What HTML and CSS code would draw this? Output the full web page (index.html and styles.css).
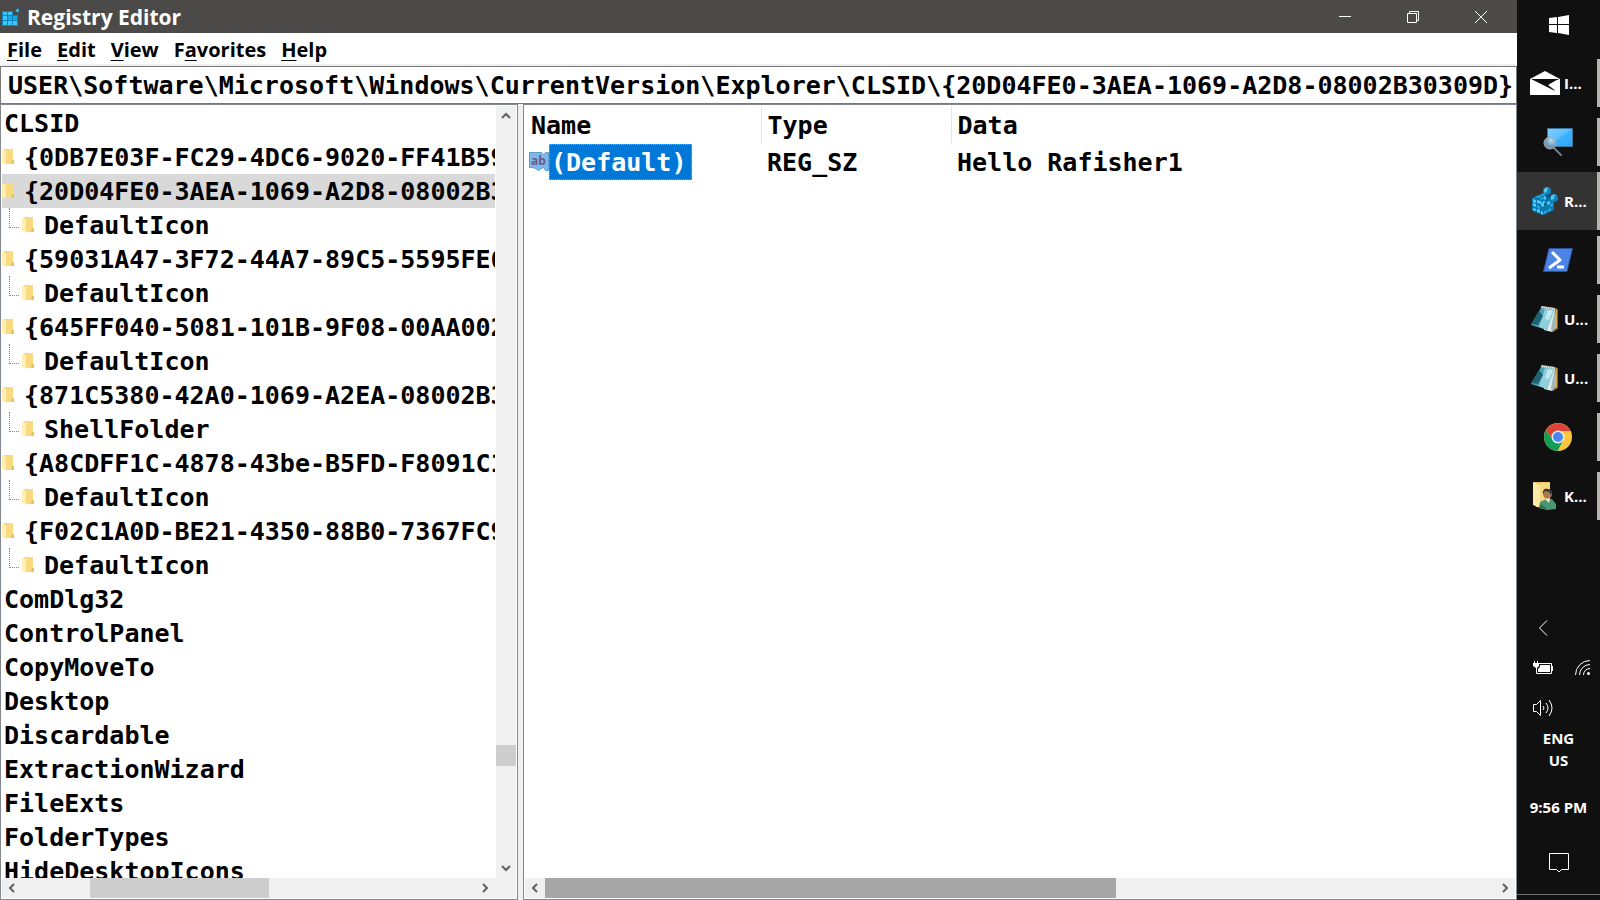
FILE: index.html
```html
<!DOCTYPE html>
<html lang="en">
<head>
    <meta charset="UTF-8">
    <meta name="viewport" content="width=device-width, initial-scale=1.0">
    <title>Registry Editor</title>
    <link rel="stylesheet" href="styles.css">
</head>
<body>
    <!-- shared icons -->
    <svg class="sprites" aria-hidden="true">
        <symbol id="folder" viewBox="0 0 12 16">
            <path fill="#f3d06c" d="M2 0h9v11h1v4H3z"/>
            <path fill="#f9da80" d="M4 0h7v11h1v4H4z"/>
            <path fill="#eec25a" d="M10 11h2v4h-3z"/>
            <path fill="#ffefb5" d="M0 0l4 2v14l-4-2z"/>
        </symbol>
        <symbol id="left" viewBox="0 0 10 10">
            <path fill="none" stroke="#606060" stroke-width="2" d="M7 1L3 5l4 4"/>
        </symbol>
        <symbol id="right" viewBox="0 0 10 10">
            <path fill="none" stroke="#606060" stroke-width="2" d="M3 1l4 4-4 4"/>
        </symbol>
        <symbol id="up" viewBox="0 0 10 10">
            <path fill="none" stroke="#606060" stroke-width="2" d="M1 7l4-4 4 4"/>
        </symbol>
        <symbol id="down" viewBox="0 0 10 10">
            <path fill="none" stroke="#606060" stroke-width="2" d="M1 3l4 4 4-4"/>
        </symbol>
        <symbol id="notepad" viewBox="0 0 28 28">
            <path fill="#8a6420" d="M23 3l4 1v20l-5 3z"/>
            <path fill="#d9a648" d="M25 4l1 1v18l-2 1z"/>
            <path fill="#dfe9ea" d="M10 1l14 2 1 19-4 5-8-2z"/>
            <path fill="#9fb7bb" d="M24 3l1 19-4 5-1-3z"/>
            <path fill="#4fa3b5" d="M10 3l13 2-7 20L0 20z"/>
            <path fill="#8fd0dc" d="M14 4l9 1-7 20-8-3z"/>
            <path fill="#1f6274" d="M8 6l4 5-5 9-7-1z"/>
            <path fill="#c5e9ee" d="M17 5l5 1-4 9-4-1z"/>
            <path fill="none" stroke="#a9a9a0" stroke-width="2" stroke-dasharray="1 1" d="M10 2l14 2"/>
        </symbol>
    </svg>

    <div class="desktop">
        <main class="window">
            <header class="titlebar">
                <svg class="app-icon" viewBox="0 0 18 18">
                    <path fill="#0a86c4" d="M0 3h11v4h5v11H0z"/>
                    <path fill="#3fc6f5" d="M1 4h4v3H1zM6 4h4v3H6zM1 8h4v4H1zM1 13h4v4H1zM6 13h4v4H6zM11 13h4v4h-4z"/>
                    <path fill="#19a5e3" d="M6 8h4v4H6zM11 8h4v4h-4z"/>
                    <path fill="#0a86c4" d="M13 2l3-2 2 2-2 3z"/>
                    <path fill="#3fc6f5" d="M15 1h1v1h1v1h-1v1h-1V3h-1V2h1z"/>
                </svg>
                <h1>Registry Editor</h1>
                <div class="caption-buttons">
                    <button aria-label="Minimize"><svg viewBox="0 0 12 12"><path d="M0 5.500h12"/></svg></button>
                    <button aria-label="Restore"><svg viewBox="0 0 12 12"><path d="M.5 2.500h9v9h-9zM2.500 2.500v-2h9v9h-2"/></svg></button>
                    <button aria-label="Close"><svg viewBox="0 0 12 12"><path d="M0 0l12 12M12 0L0 12"/></svg></button>
                </div>
            </header>

            <nav class="menubar">
                <button><span><u>F</u>ile</span></button>
                <button><span><u>E</u>dit</span></button>
                <button><span><u>V</u>iew</span></button>
                <button><span>F<u>a</u>vorites</span></button>
                <button><span><u>H</u>elp</span></button>
            </nav>

            <input class="address" type="text" aria-label="Key path" spellcheck="false" value="USER\Software\Microsoft\Windows\CurrentVersion\Explorer\CLSID\{20D04FE0-3AEA-1069-A2D8-08002B30309D}">

            <div class="panes">
                <section class="pane tree-pane">
                    <ul class="tree">
                        <li>CLSID</li>
                        <li class="key"><svg><use href="#folder"/></svg>{0DB7E03F-FC29-4DC6-9020-FF41B59E513A}</li>
                        <li class="key selected"><svg><use href="#folder"/></svg>{20D04FE0-3AEA-1069-A2D8-08002B30309D}</li>
                        <li class="key child"><svg><use href="#folder"/></svg>DefaultIcon</li>
                        <li class="key"><svg><use href="#folder"/></svg>{59031A47-3F72-44A7-89C5-5595FE6B30EE}</li>
                        <li class="key child"><svg><use href="#folder"/></svg>DefaultIcon</li>
                        <li class="key"><svg><use href="#folder"/></svg>{645FF040-5081-101B-9F08-00AA002F954E}</li>
                        <li class="key child"><svg><use href="#folder"/></svg>DefaultIcon</li>
                        <li class="key"><svg><use href="#folder"/></svg>{871C5380-42A0-1069-A2EA-08002B30309D}</li>
                        <li class="key child"><svg><use href="#folder"/></svg>ShellFolder</li>
                        <li class="key"><svg><use href="#folder"/></svg>{A8CDFF1C-4878-43be-B5FD-F8091C1C60D0}</li>
                        <li class="key child"><svg><use href="#folder"/></svg>DefaultIcon</li>
                        <li class="key"><svg><use href="#folder"/></svg>{F02C1A0D-BE21-4350-88B0-7367FC96EF3C}</li>
                        <li class="key child"><svg><use href="#folder"/></svg>DefaultIcon</li>
                        <li>ComDlg32</li>
                        <li>ControlPanel</li>
                        <li>CopyMoveTo</li>
                        <li>Desktop</li>
                        <li>Discardable</li>
                        <li>ExtractionWizard</li>
                        <li>FileExts</li>
                        <li>FolderTypes</li>
                        <li>HideDesktopIcons</li>
                    </ul>
                    <div class="scrollbar vertical">
                        <button aria-label="Scroll up"><svg><use href="#up"/></svg></button>
                        <div class="track"><div class="before"></div><div class="thumb"></div><div class="after"></div></div>
                        <button aria-label="Scroll down"><svg><use href="#down"/></svg></button>
                    </div>
                    <div class="scrollbar horizontal">
                        <button aria-label="Scroll left"><svg><use href="#left"/></svg></button>
                        <div class="track"><div class="before"></div><div class="thumb"></div><div class="after"></div></div>
                        <button aria-label="Scroll right"><svg><use href="#right"/></svg></button>
                    </div>
                </section>

                <section class="pane list-pane">
                    <div class="list">
                        <table>
                            <thead>
                                <tr><th class="col-name">Name</th><th class="col-type">Type</th><th>Data</th></tr>
                            </thead>
                            <tbody>
                                <tr>
                                    <td class="value-name">
                                        <div>
                                            <svg viewBox="0 0 20 20">
                                                <path fill="#7ab9ea" stroke="#5a9fd0" d="M.5.5h12l2 2 2-2h3v18h-3l-2-3-2 1-3 2-3-2-3-1H.5z"/>
                                                <text x="2" y="13">ab</text>
                                            </svg>
                                            <span>(Default)</span>
                                        </div>
                                    </td>
                                    <td>REG_SZ</td>
                                    <td>Hello Rafisher1</td>
                                </tr>
                            </tbody>
                        </table>
                    </div>
                    <div class="scrollbar horizontal">
                        <button aria-label="Scroll left"><svg><use href="#left"/></svg></button>
                        <div class="track"><div class="thumb"></div><div class="after"></div></div>
                        <button aria-label="Scroll right"><svg><use href="#right"/></svg></button>
                    </div>
                </section>
            </div>
        </main>

        <aside class="taskbar">
            <button class="start" aria-label="Start">
                <svg width="20" height="20" viewBox="0 0 20 20"><path fill="#fff" d="M0 3l8-1v7H0zM9 2l11-2v9H9zM0 10h8v8l-8-1zM9 10h11v10L9 18z"/></svg>
            </button>
            <div class="tasks">
                <button class="task">
                    <svg height="24" viewBox="0 0 30 24">
                        <path fill="#fff" d="M0 8l15-8 15 8v16H0z"/>
                        <path fill="#101010" d="M1 8h28l-9 5 5 7-10-5z"/>
                        <path fill="#fff" d="M27 9l-9 5 8 6z"/>
                    </svg>
                    <span>I...</span>
                </button>
                <button class="task" aria-label="Screen search">
                    <svg height="28" viewBox="0 0 30 28">
                        <defs>
                            <linearGradient id="screen" x2="1" y2="1"><stop stop-color="#7fcfff"/><stop offset=".5" stop-color="#5cbdff"/><stop offset=".5" stop-color="#3fb2ff"/><stop offset="1" stop-color="#2aa5fa"/></linearGradient>
                            <radialGradient id="lens" cx=".6" cy=".3"><stop stop-color="#b9def2"/><stop offset="1" stop-color="#7096b0"/></radialGradient>
                        </defs>
                        <path fill="url(#screen)" stroke="#3f7697" d="M4.500.5h25v18h-25z"/>
                        <path stroke="#6f7f8b" stroke-width="2" stroke-linecap="round" d="M11 20l7 7"/>
                        <circle cx="7" cy="15" r="6" fill="url(#lens)" stroke="#a7adb2"/>
                    </svg>
                </button>
                <button class="task active">
                    <svg height="28" viewBox="0 0 26 28">
                        <path fill="#0878b0" d="M0 11l10-4 12 5v11l-11 5-11-4z"/>
                        <path fill="#4fcaf5" d="M1 12l3 1v3l-3-1zM5 13l4 1v3l-4-1zM1 16l3 1v3l-3-1zM1 21l3 1v2l-3-1zM5 22l3 1v3l-3-1zM9 24l2 1v3l-2-1z"/>
                        <path fill="#20a4da" d="M5 18l3 1v3l-3-1zM3 10l4-2 3 1-4 2zM8 8l3-2 3 2-3 1zM7 11l4-1 2 1-3 2zM12 24l3-1v3l-3 1zM16 22l3-1v3l-3 1zM18 17l3-1v3l-3 1z"/>
                        <path fill="#4fcaf5" d="M9 16l3-2 3 2v3l-3 1-3-1zM15 15l3-1v3l-3 1zM12 9l3 2v3l-3-2z"/>
                        <path fill="#05699c" d="M12 16l3-1v4l-3 1zM14 10l3-1v4l-3 1z"/>
                        <circle cx="15" cy="4" r="4" fill="#0c84ba"/><path fill="#55c7ef" d="M12 2l4-2-1 5-3 1z"/>
                        <circle cx="22" cy="11" r="4" fill="#0c84ba"/><path fill="#55c7ef" d="M19 9l4-2-1 5-3 1z"/>
                    </svg>
                    <span>R...</span>
                </button>
                <button class="task" aria-label="PowerShell">
                    <svg height="24" viewBox="0 0 30 24">
                        <path fill="#4b83e6" stroke="#2c5099" d="M6 .5h23.500L24 23.500H.5z"/>
                        <path fill="none" stroke="#fff" stroke-width="3" stroke-linejoin="round" d="M9 4l8 8-11 8M14 19h7"/>
                    </svg>
                </button>
                <button class="task"><svg height="28"><use href="#notepad" height="28"/></svg><span>U...</span></button>
                <button class="task"><svg height="28"><use href="#notepad" height="28"/></svg><span>U...</span></button>
                <button class="task" aria-label="Chrome">
                    <svg height="28" viewBox="0 0 28 28">
                        <circle cx="14" cy="14" r="14" fill="#fdc73e"/>
                        <path fill="#dc4437" d="M1.900 7A14 14 0 0 1 26.500 8H14L8.800 17z"/>
                        <path fill="#129d58" d="M1.900 7A14 14 0 0 0 13.500 28L19.200 17.500 14 20 8.800 17z"/>
                        <circle cx="14" cy="14" r="6.500" fill="#f1f1f1"/>
                        <circle cx="14" cy="14" r="5" fill="#4a87ee"/>
                    </svg>
                </button>
                <button class="task">
                    <svg height="28" viewBox="0 0 24 28">
                        <path fill="#eec660" d="M1 0h16v20l-7 5H3z"/>
                        <path fill="#f7d983" d="M7 1h10v18H7z"/>
                        <path fill="#ffe9a5" d="M0 0l7 3v23l-7-3z"/>
                        <path fill="#4a9672" d="M6 26l1-6 6-3h6l4 5v5l-9 1z"/>
                        <path fill="#2f6e51" d="M6 26l2-4 6 5z"/>
                        <path fill="#e8e8df" d="M12 17h5l-1 4z"/>
                        <circle cx="14.500" cy="12" r="4.500" fill="#a97953"/>
                        <path fill="#353b3d" d="M10 12c-1-4 2-6 5-5 4 0 5 3 3 6l-2-3-4-1z"/>
                    </svg>
                    <span>K...</span>
                </button>
            </div>

            <div class="tray">
                <button class="wide" aria-label="Show hidden icons"><svg width="10" height="16" viewBox="0 0 10 16"><path d="M9 .5L1.500 8 9 15.500"/></svg></button>
                <button aria-label="Battery">
                    <svg width="20" height="14" viewBox="0 0 20 14">
                        <path d="M6 2.500h12.500v10h-15V9M19.500 5v5"/>
                        <path class="fill" d="M7 4h10v7H5V8l2-2zM1 0h1v2h2V0h1v2h1v3L4 7v5H3V7L0 5V2h1z"/>
                    </svg>
                </button>
                <button aria-label="Network">
                    <svg width="16" height="16" viewBox="0 0 16 16"><path d="M.5 15A14.500 14.500 0 0 1 15 .5M4.500 15A10.500 10.500 0 0 1 15 4.500M8.500 15A6.500 6.500 0 0 1 15 8.500"/><circle class="fill" cx="13.500" cy="13.500" r="1.500"/></svg>
                </button>
                <button class="wide" aria-label="Volume">
                    <svg width="20" height="18" viewBox="0 0 20 18"><path d="M.5 5.500h3l4-4v15l-4-4h-3zM10 7q2 2 0 4M13 4q4 5 0 10M16 1q6 8 0 16"/></svg>
                </button>
            </div>
            <button class="language">ENG<br>US</button>
            <button class="clock">9:56 PM</button>
            <button class="notifications" aria-label="Notifications">
                <svg width="20" height="20" viewBox="0 0 20 20"><path fill="none" stroke="#fff" d="M.5.5h19v16h-7L10 19l-2.500-2.500h-7z"/></svg>
            </button>
            <button class="show-desktop" aria-label="Show desktop"></button>
        </aside>
    </div>
</body>
</html>
```
FILE: styles.css
```css
* {
    box-sizing: border-box;
}
body {
    margin: 0;
    color: #000;
    font-family: "Open Sans", "Noto Sans", sans-serif;
    font-weight: 700;
    overflow: hidden;
}
button {
    margin: 0;
    padding: 0;
    border: none;
    background: none;
    color: inherit;
    font: inherit;
    display: flex;
    align-items: center;
    justify-content: center;
}
svg {
    display: block;
    flex: none;
}
.sprites {
    display: none;
}
.desktop {
    display: flex;
    height: 100vh;
}
.window {
    flex: 1;
    min-width: 0;
    display: flex;
    flex-direction: column;
    background: #f0f0f0;
}

/* title bar and menu */
.titlebar {
    display: flex;
    align-items: center;
    height: 33px;
    flex: none;
    padding: 0 2px;
    background: #4c4a48;
    color: #fff;
}
.app-icon {
    width: 18px;
    height: 18px;
}
.titlebar h1 {
    margin: 0 0 0 7px;
    font-size: 21px;
    line-height: 32px;
}
.caption-buttons {
    display: flex;
    align-self: stretch;
    margin-left: auto;
}
.caption-buttons button {
    width: 68px;
}
.caption-buttons svg {
    width: 12px;
    height: 12px;
    fill: none;
    stroke: #fff;
}
.menubar {
    display: flex;
    gap: 15px;
    flex: none;
    height: 31px;
    margin-bottom: 2px;
    padding: 2px 0 0 7px;
    background: #fff;
    font-size: 20px;
}
.menubar u {
    text-underline-offset: 3px;
    text-decoration-thickness: 1px;
    text-decoration-skip-ink: none;
}

/* key path */
.address {
    flex: none;
    height: 38px;
    padding: 0 0 0 7px;
    border: 1px solid #7a7a7a;
    background: #fff;
    color: #000;
    outline: none;
}
.address,
.tree,
.list table {
    font-family: "DejaVu Sans Mono", monospace;
    font-size: 25px;
    font-weight: 700;
}

/* panes */
.panes {
    flex: 1;
    min-height: 0;
    display: grid;
    grid-template-columns: 518px 1fr;
    gap: 5px;
}
.pane {
    min-width: 0;
    min-height: 0;
    padding: 1px;
    border: 1px solid #828790;
    background: #fff;
    display: grid;
    grid-template-rows: minmax(0, 1fr) 20px;
}
.tree-pane {
    grid-template-columns: minmax(0, 1fr) 20px;
}
.tree {
    margin: 0 1px 0 0;
    padding: 0;
    list-style: none;
    overflow: hidden;
}
.tree li {
    display: flex;
    align-items: center;
    height: 34px;
    padding-left: 2px;
    white-space: nowrap;
}
.tree .key {
    gap: 10px;
    padding-left: 0;
}
.tree .selected {
    background: #d9d9d9;
}
.tree svg {
    width: 12px;
    height: 16px;
}
.tree .child::before {
    content: "";
    width: 9px;
    height: 19px;
    margin-left: 7px;
    margin-right: -7px;
    align-self: flex-start;
    border-left: 1px dotted #808080;
    border-bottom: 1px dotted #808080;
}

/* scrollbars */
.scrollbar {
    display: flex;
    background: #f0f0f0;
}
.scrollbar svg {
    width: 10px;
    height: 10px;
}
.scrollbar button {
    flex: none;
    width: 20px;
    height: 20px;
}
.track {
    flex: 1;
    display: flex;
}
.vertical,
.vertical .track {
    flex-direction: column;
}
.thumb {
    background: #cdcdcd;
}
.vertical .before {
    flex: 619;
}
.vertical .thumb {
    flex: 21;
}
.vertical .after {
    flex: 92;
}
.tree-pane .horizontal {
    grid-column: span 2;
    padding-right: 21px;
}
.tree-pane .horizontal .before {
    flex: 68;
}
.tree-pane .horizontal .thumb {
    flex: 179;
}
.tree-pane .horizontal .after {
    flex: 206;
}
.list-pane .thumb {
    flex: 570;
    background: #a6a6a6;
}
.list-pane .after {
    flex: 379;
}

/* values */
.list {
    overflow: hidden;
}
.list table {
    width: 100%;
    table-layout: fixed;
    border-collapse: collapse;
    white-space: nowrap;
}
.list th {
    height: 38px;
    padding: 2px 0 0 6px;
    line-height: 36px;
    text-align: left;
    font-weight: 700;
    border-right: 1px solid #e5e5e5;
}
.list th:last-child {
    border-right: none;
}
.list td {
    padding: 0 0 0 6px;
    line-height: 38px;
}
.list .col-name {
    width: 236px;
}
.list .col-type {
    width: 190px;
}
.list .value-name {
    padding-left: 4px;
    vertical-align: top;
}
.value-name div {
    display: flex;
    align-items: center;
}
.value-name svg {
    width: 20px;
    height: 20px;
}
.value-name text {
    fill: #6b5a86;
    font-family: "Open Sans", sans-serif;
    font-size: 12px;
}
.value-name span {
    height: 36px;
    padding: 0 5px 0 1px;
    line-height: 36px;
    background: #0078d7;
    border: 1px dotted #ff8728;
    color: #fff;
}

/* taskbar */
.taskbar {
    width: 83px;
    flex: none;
    display: flex;
    flex-direction: column;
    background: #101010;
    color: #fff;
    font-size: 15px;
}
.start {
    height: 50px;
}
.tasks {
    display: grid;
    gap: 1px;
    margin-top: 4px;
}
.task {
    height: 58px;
    gap: 4px;
    padding-right: 1px;
    background: linear-gradient(#b5b4ae, #b5b4ae) right center / 3px 48px no-repeat;
}
.task svg {
    width: 30px;
}
.task span {
    width: 22px;
    text-align: left;
}
.task.active {
    background: linear-gradient(90deg, #333 80px, #b5b4ae 80px);
}
.tray {
    display: grid;
    grid-template-columns: 40px 40px;
    grid-auto-rows: 40px;
    margin-top: auto;
    padding-left: 6px;
}
.tray .wide {
    grid-column: span 2;
    margin-right: 40px;
}
.tray svg {
    fill: none;
    stroke: #fff;
}
.tray .fill {
    fill: #fff;
    stroke: none;
}
.language {
    height: 42px;
    line-height: 22px;
}
.clock {
    height: 74px;
}
.notifications {
    height: 38px;
}
.show-desktop {
    height: 6px;
    margin-top: 12px;
    border-top: 1px solid #707070;
}
```
